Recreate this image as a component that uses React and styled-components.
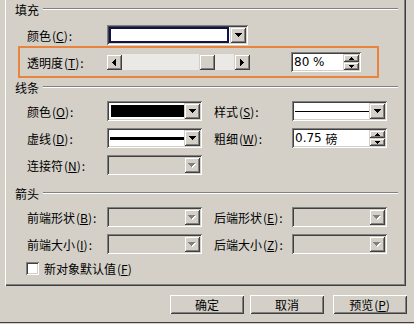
import React from 'react';
import styled, { createGlobalStyle, css } from 'styled-components';

const GlobalStyle = createGlobalStyle`
  html, body { margin: 0; padding: 0; background: #d4d0c8; }
  body {
    width: 414px; height: 324px; overflow: hidden;
    font-family: "Noto Sans CJK SC", "DejaVu Sans", sans-serif;
    font-size: 12px; color: #000;
  }
`;

const raised = css`
  background: #d4d0c8;
  box-shadow: inset 1px 1px 0 #d4d0c8, inset -1px -1px 0 #404040,
    inset 2px 2px 0 #ffffff, inset -2px -2px 0 #808080;
`;

const sunken = css`
  box-shadow: inset 1px 1px 0 #808080, inset -1px -1px 0 #ffffff,
    inset 2px 2px 0 #404040, inset -2px -2px 0 #d4d0c8;
`;

const Window = styled.div`
  box-sizing: border-box;
  width: 414px;
  height: 323px;
  border-bottom: 1px solid #404040;
  display: flex;
  flex-direction: column;
`;

const Panel = styled.div`
  box-sizing: border-box;
  margin-left: 5px;
  width: 401px;
  height: 286px;
  border-left: 1px solid #ffffff;
  box-shadow: inset -1px -1px 0 #404040, inset -2px -2px 0 #808080;
  display: flex;
  flex-direction: column;
`;

const SectionTitle = styled.div`
  display: flex;
  align-items: center;
  height: 18px;
  padding-left: 9px;
  margin-right: 8px;
  margin-top: ${p => p.$mt || 0}px;
  white-space: nowrap;
  &::after {
    content: '';
    flex: 1;
    height: 0;
    margin-left: 4px;
    border-top: 1px solid #808080;
    border-bottom: 1px solid #ffffff;
  }
`;

const Row = styled.div`
  display: flex;
  align-items: center;
  height: 20px;
  margin-left: 21px;
  margin-top: ${p => p.$mt || 0}px;
`;

const Label = styled.span`
  flex: none;
  width: ${p => p.$w || 80}px;
  margin-left: ${p => p.$ml || 0}px;
  white-space: nowrap;
  color: ${p => (p.$disabled ? '#000' : '#000')};
`;

const Key = styled.span`
  margin: 0 1px;
  u { text-decoration: underline; text-underline-offset: 1px; }
`;

const Highlight = styled.div`
  box-sizing: border-box;
  margin: 1px 0 0 12px;
  width: 361px;
  height: 32px;
  border: 2px solid #e8843c;
  display: flex;
  align-items: center;
  padding-left: 7px;
`;

const Combo = styled.div`
  box-sizing: border-box;
  flex: none;
  width: ${p => p.$w || 95}px;
  height: 20px;
  padding: 2px;
  display: flex;
  background: ${p => (p.$disabled ? '#d4d0c8' : '#ffffff')};
  ${sunken};
`;

const Field = styled.div`
  flex: 1;
  display: flex;
  align-items: center;
  padding: ${p => p.$pad ?? '0 2px'};
  min-width: 0;
`;

const FocusField = styled.div`
  flex: 1;
  box-sizing: border-box;
  border: 2px solid #12124a;
  background: #ffffff;
  margin-right: 1px;
`;

const Swatch = styled.div`
  flex: 1;
  height: 12px;
  background: ${p => p.$color};
`;

const LineSample = styled.div`
  flex: 1;
  height: ${p => p.$thick}px;
  background: #000;
  margin-right: ${p => p.$mr || 0}px;
`;

const DropButton = styled.div`
  flex: none;
  width: 16px;
  height: 16px;
  display: flex;
  align-items: center;
  justify-content: center;
  ${raised};
`;

const Spin = styled.div`
  box-sizing: border-box;
  flex: none;
  width: ${p => p.$w || 95}px;
  height: 20px;
  padding: 2px;
  display: flex;
  background: #ffffff;
  margin-left: ${p => p.$ml || 0}px;
  ${sunken};
`;

const SpinText = styled.div`
  flex: 1;
  display: flex;
  align-items: center;
  padding-left: 1px;
  font-family: "DejaVu Sans", "Noto Sans CJK SC", sans-serif;
  font-size: 12px;
  white-space: pre;
  span.cjk { font-family: "Noto Sans CJK SC", sans-serif; }
`;

const SpinButtons = styled.div`
  flex: none;
  width: 16px;
  display: flex;
  flex-direction: column;
`;

const SpinButton = styled.div`
  flex: 1;
  display: flex;
  align-items: center;
  justify-content: center;
  ${raised};
`;

const Scrollbar = styled.div`
  flex: none;
  width: 144px;
  height: 16px;
  display: flex;
  background: #ebe9e5;
`;

const ScrollButton = styled.div`
  flex: none;
  width: 16px;
  height: 16px;
  display: flex;
  align-items: center;
  justify-content: center;
  ${raised};
`;

const Track = styled.div`
  flex: 1;
  display: flex;
`;

const Thumb = styled.div`
  flex: none;
  width: 16px;
  height: 16px;
  margin-left: ${p => p.$offset}px;
  ${raised};
`;

const CheckRow = styled.div`
  display: flex;
  align-items: center;
  gap: 5px;
  margin: 8px 0 0 20px;
  height: 13px;
`;

const CheckBox = styled.div`
  box-sizing: border-box;
  width: 13px;
  height: 13px;
  background: #ffffff;
  ${sunken};
`;

const ButtonBar = styled.div`
  display: flex;
  justify-content: flex-end;
  padding-right: 7px;
  margin-top: 9px;
`;

const PushButton = styled.div`
  box-sizing: border-box;
  width: 74px;
  height: 19px;
  margin-left: ${p => p.$ml || 0}px;
  display: flex;
  align-items: center;
  justify-content: center;
  ${raised};
  box-shadow: inset 1px 1px 0 #ffffff, inset -1px -1px 0 #404040,
    inset 2px 2px 0 #d4d0c8, inset -2px -2px 0 #808080;
`;

const Arrow = ({ d, w, h, disabled }) => (
  <svg width={w + (disabled ? 1 : 0)} height={h + (disabled ? 1 : 0)} shapeRendering="crispEdges">
    {disabled && <path d={d} fill="#ffffff" transform="translate(1,1)" />}
    <path d={d} fill={disabled ? '#808080' : '#000'} />
  </svg>
);

const DOWN = 'M0 0h7v1h-1v1h-1v1h-1v1h-1v-1h-1v-1h-1v-1h-1z';
const LEFT = 'M4 0v7h-1v-1h-1v-1h-1v-1h-1v-1h1v-1h1v-1h1v-1z';
const RIGHT = 'M0 0v7h1v-1h1v-1h1v-1h1v-1h-1v-1h-1v-1h-1v-1z';
const UP_S = 'M2 0h1v1h1v1h1v1h-5v-1h1v-1h1z';
const DOWN_S = 'M0 0h5v1h-1v1h-1v1h-1v-1h-1v-1h-1z';

const Drop = ({ disabled }) => (
  <DropButton>
    <Arrow d={DOWN} w={7} h={4} disabled={disabled} />
  </DropButton>
);

const Lbl = ({ text, k, w, ml }) => (
  <Label $w={w} $ml={ml}>
    {text}
    <Key>(<u>{k}</u>)</Key>:
  </Label>
);

const SpinBox = ({ children, w, ml }) => (
  <Spin $w={w} $ml={ml}>
    <SpinText>{children}</SpinText>
    <SpinButtons>
      <SpinButton><Arrow d={UP_S} w={5} h={3} /></SpinButton>
      <SpinButton><Arrow d={DOWN_S} w={5} h={3} /></SpinButton>
    </SpinButtons>
  </Spin>
);

export default function App() {
  const transparency = 80;
  const trackWidth = 144 - 32;
  const thumbOffset = Math.round((trackWidth - 16) * transparency / 100);
  return (
    <>
      <GlobalStyle />
      <Window>
        <Panel>
          <SectionTitle>填充</SectionTitle>
          <Row $mt={7}>
            <Lbl text="颜色" k="C" />
            <Combo $w={141}>
              <FocusField />
              <Drop />
            </Combo>
          </Row>
          <Highlight>
            <Lbl text="透明度" k="T" w={79} />
            <Scrollbar>
              <ScrollButton><Arrow d={LEFT} w={4} h={7} /></ScrollButton>
              <Track><Thumb $offset={thumbOffset} /></Track>
              <ScrollButton><Arrow d={RIGHT} w={4} h={7} /></ScrollButton>
            </Scrollbar>
            <SpinBox w={70} ml={41}>{'80 %'}</SpinBox>
          </Highlight>

          <SectionTitle>线条</SectionTitle>
          <Row $mt={5}>
            <Lbl text="颜色" k="O" />
            <Combo>
              <Field $pad="2px 0 2px 2px"><Swatch $color="#000" /></Field>
              <Drop />
            </Combo>
            <Lbl text="样式" k="S" w={78} ml={12} />
            <Combo>
              <Field $pad="0 0 0 1px"><LineSample $thick={1} /></Field>
              <Drop />
            </Combo>
          </Row>
          <Row $mt={7}>
            <Lbl text="虚线" k="D" />
            <Combo>
              <Field $pad="0 0 0 1px"><LineSample $thick={3} mr={0} /></Field>
              <Drop />
            </Combo>
            <Lbl text="粗细" k="W" w={78} ml={12} />
            <SpinBox w={95}>0.75 <span className="cjk">磅</span></SpinBox>
          </Row>
          <Row $mt={7}>
            <Lbl text="连接符" k="N" />
            <Combo $disabled>
              <Field />
              <Drop disabled />
            </Combo>
          </Row>

          <SectionTitle $mt={9}>箭头</SectionTitle>
          <Row $mt={5}>
            <Lbl text="前端形状" k="B" />
            <Combo $disabled><Field /><Drop disabled /></Combo>
            <Lbl text="后端形状" k="E" w={78} ml={12} />
            <Combo $disabled><Field /><Drop disabled /></Combo>
          </Row>
          <Row $mt={7}>
            <Lbl text="前端大小" k="I" />
            <Combo $disabled><Field /><Drop disabled /></Combo>
            <Lbl text="后端大小" k="Z" w={78} ml={12} />
            <Combo $disabled><Field /><Drop disabled /></Combo>
          </Row>
          <CheckRow>
            <CheckBox />
            <span>新对象默认值<Key>(<u>F</u>)</Key></span>
          </CheckRow>
        </Panel>
        <ButtonBar>
          <PushButton>确定</PushButton>
          <PushButton $ml={6}>取消</PushButton>
          <PushButton $ml={9}>预览<Key>(<u>P</u>)</Key></PushButton>
        </ButtonBar>
      </Window>
    </>
  );
}
